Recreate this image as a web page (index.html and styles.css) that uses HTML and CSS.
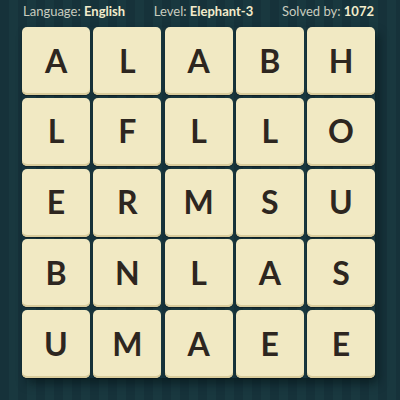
FILE: index.html
```html
<!DOCTYPE html>
<html>
<head>
<meta charset="utf-8">
<link rel="stylesheet" href="styles.css">
</head>
<body>
<div class="page">
  <div class="header">
    <span class="item">Language: <b>English</b></span>
    <span class="item">Level: <b>Elephant-3</b></span>
    <span class="item">Solved by: <b>1072</b></span>
  </div>
  <div class="board">
    <div class="tile">A</div><div class="tile">L</div><div class="tile">A</div><div class="tile">B</div><div class="tile">H</div>
    <div class="tile">L</div><div class="tile">F</div><div class="tile">L</div><div class="tile">L</div><div class="tile">O</div>
    <div class="tile">E</div><div class="tile">R</div><div class="tile">M</div><div class="tile">S</div><div class="tile">U</div>
    <div class="tile">B</div><div class="tile">N</div><div class="tile">L</div><div class="tile">A</div><div class="tile">S</div>
    <div class="tile">U</div><div class="tile">M</div><div class="tile">A</div><div class="tile">E</div><div class="tile">E</div>
  </div>
</div>
</body>
</html>
```
FILE: styles.css
```css
html, body {
  margin: 0;
  padding: 0;
  width: 400px;
  height: 400px;
  overflow: hidden;
}
body {
  background-color: #15313a;
  background-image: repeating-linear-gradient(90deg, #16323a 0px, #16323a 9px, #19383f 9px, #19383f 18px);
  font-family: Lato, "Open Sans", sans-serif;
}
.page {
  display: flex;
  flex-direction: column;
  align-items: flex-start;
}
.header {
  display: flex;
  justify-content: space-between;
  box-sizing: border-box;
  width: 400px;
  padding: 3px 26px 0 23px;
  height: 27px;
  font-size: 13px;
  line-height: 16px;
  color: #c9ccbf;
}
.header b {
  color: #f2ebcb;
  font-weight: 700;
}
.board {
  margin: 0 0 0 22px;
  display: grid;
  grid-template-columns: repeat(5, 68px);
  grid-template-rows: repeat(5, 68px);
  column-gap: 3.25px;
  row-gap: 2.75px;
  box-shadow: 4px 6px 10px rgba(5, 20, 24, 0.6);
  border-radius: 6px;
}
.tile {
  background: #f1e9c3;
  border-radius: 5px;
  box-shadow: inset 0 -2px 0 #d9cc9c, 0 1px 1px rgba(0,0,0,0.4);
  display: flex;
  align-items: center;
  justify-content: center;
  font-family: Lato, sans-serif;
  font-weight: 700;
  font-size: 32px;
  color: #2d2620;
  padding-bottom: 2px;
  box-sizing: border-box;
}
```
